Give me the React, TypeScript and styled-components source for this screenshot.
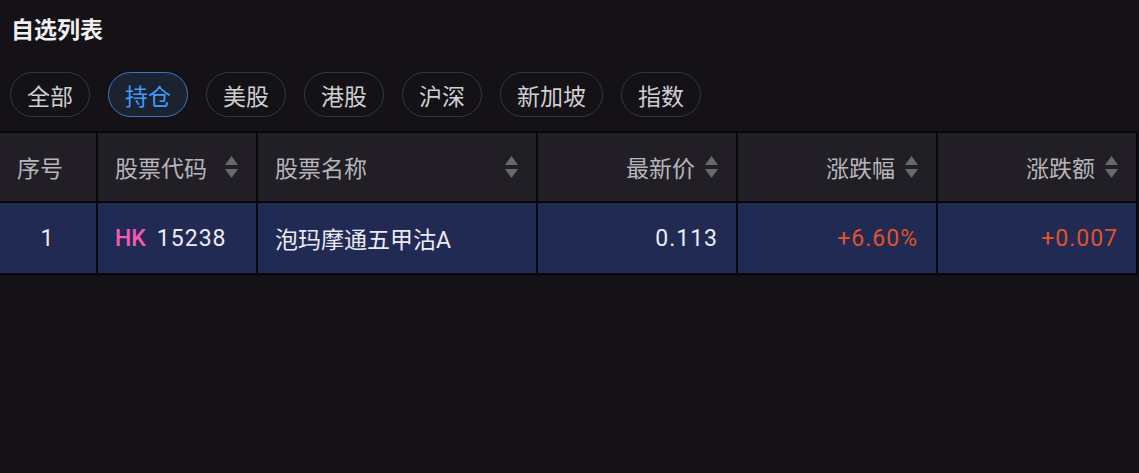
import React from 'react';
import styled, { createGlobalStyle, css } from 'styled-components';

const GlobalStyle = createGlobalStyle`
  html, body {
    margin: 0;
    padding: 0;
    background: #141217;
  }
  body {
    font-family: Roboto, "Noto Sans CJK SC", sans-serif;
    -webkit-font-smoothing: antialiased;
  }
`;

const Page = styled.div`
  width: 1139px;
  height: 473px;
  background: #141217;
  overflow: hidden;
`;

const Title = styled.h1`
  margin: 0;
  padding: 19px 0 0 11px;
  font-size: 23px;
  line-height: 24px;
  font-weight: 700;
  color: #f0eff2;
`;

const Tabs = styled.div`
  display: flex;
  gap: 18px;
  padding: 29px 0 0 10px;
`;

const Tab = styled.button<{ $active?: boolean }>`
  height: 45px;
  padding: 0 16px;
  border-radius: 23px;
  border: 1px solid #38373c;
  background: transparent;
  color: #cfcfd2;
  font-family: inherit;
  font-size: 23px;
  cursor: pointer;

  ${(p) =>
    p.$active &&
    css`
      border-color: #3c78c0;
      background: #1b2230;
      color: #3f9cff;
    `}
`;

const Grid = styled.div`
  margin-top: 14px;
  width: 1136px;
  display: grid;
  grid-template-columns: 96px 158px 278px 198px 198px 198px;
  grid-template-rows: 68px 70px;
  gap: 2px;
  padding: 2px 2px 2px 0;
  background: #08080b;
`;

type Align = 'left' | 'right' | 'center';

const HeadCell = styled.div<{ $align: Align }>`
  display: flex;
  align-items: center;
  gap: 10px;
  padding: 0 18px 0 17px;
  background: #211f25;
  color: #b6b5ba;
  font-size: 23px;
  justify-content: ${(p) =>
    p.$align === 'left' ? 'space-between' : p.$align === 'right' ? 'flex-end' : 'flex-start'};
`;

const Cell = styled.div<{ $align: Align; $tone?: 'up' }>`
  display: flex;
  align-items: center;
  gap: 11px;
  padding: 0 18px 0 17px;
  background: #212a52;
  color: ${(p) => (p.$tone === 'up' ? '#e0522c' : '#ebebf2')};
  font-size: 23px;
  letter-spacing: 1px;
  justify-content: ${(p) =>
    p.$align === 'left' ? 'flex-start' : p.$align === 'right' ? 'flex-end' : 'center'};
`;

const Name = styled.span`
  letter-spacing: 0;
`;

const Market = styled.span`
  color: #f35cb2;
  font-weight: 500;
  letter-spacing: 0;
`;

const SortIcon = () => (
  <svg width="13" height="22" viewBox="0 0 13 22" fill="#69686d">
    <path d="M6.5 0 L13 9 L0 9 Z" />
    <path d="M0 13 L13 13 L6.5 22 Z" />
  </svg>
);

const tabs = ['全部', '持仓', '美股', '港股', '沪深', '新加坡', '指数'];

const columns: { label: string; align: Align; sort: boolean }[] = [
  { label: '序号', align: 'center', sort: false },
  { label: '股票代码', align: 'left', sort: true },
  { label: '股票名称', align: 'left', sort: true },
  { label: '最新价', align: 'right', sort: true },
  { label: '涨跌幅', align: 'right', sort: true },
  { label: '涨跌额', align: 'right', sort: true },
];

export default function App() {
  return (
    <Page>
      <GlobalStyle />
      <Title>自选列表</Title>
      <Tabs>
        {tabs.map((t) => (
          <Tab key={t} $active={t === '持仓'}>
            {t}
          </Tab>
        ))}
      </Tabs>
      <Grid>
        {columns.map((c) => (
          <HeadCell key={c.label} $align={c.align}>
            <span>{c.label}</span>
            {c.sort && <SortIcon />}
          </HeadCell>
        ))}
        <Cell $align="center">1</Cell>
        <Cell $align="left">
          <Market>HK</Market>
          <span>15238</span>
        </Cell>
        <Cell $align="left">
          <Name>泡玛摩通五甲沽A</Name>
        </Cell>
        <Cell $align="right">0.113</Cell>
        <Cell $align="right" $tone="up">+6.60%</Cell>
        <Cell $align="right" $tone="up">+0.007</Cell>
      </Grid>
    </Page>
  );
}
